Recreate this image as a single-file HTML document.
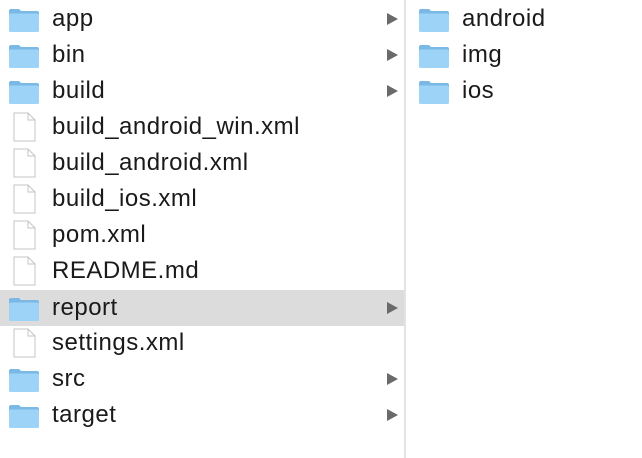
<!DOCTYPE html>
<html><head><style>
body{margin:0;width:642px;height:458px;background:#fff;font-family:"Liberation Sans",sans-serif;overflow:hidden;position:relative}
.col{position:absolute;top:0;height:458px}
.row{position:absolute;left:0;height:36px;width:100%}
.row span{position:absolute;left:52px;top:5px;font-size:24px;letter-spacing:0.5px;color:#1a1a1a;line-height:26px}
.row svg.i{position:absolute;left:8px;top:6px}
.arr{position:absolute;right:6px;top:12px;width:0;height:0;border-left:11px solid #6a6a6a;border-top:6px solid transparent;border-bottom:6px solid transparent}
.sel{background:#dcdcdc}
#div{position:absolute;left:404px;top:0;width:2px;height:458px;background:#e4e4e4}
</style></head><body>
<svg width="0" height="0" style="position:absolute"><defs>
<symbol id="f" viewBox="0 0 32 26"><path d="M1 4 Q1 2 3 2 H11 L13 4 H29 Q31 4 31 6 V23 Q31 25 29 25 H3 Q1 25 1 23Z" fill="#7ab9e6"/><path d="M1 8 Q1 6.5 3 6.5 H29 Q31 6.5 31 8 V23 Q31 25 29 25 H3 Q1 25 1 23Z" fill="#9dd3f6"/></symbol>
<symbol id="d" viewBox="0 0 32 30"><path d="M6 1 H20 L27 8 V29 H6Z" fill="#fff" stroke="#c4c4c4"/><path d="M20 1 V8 H27" fill="none" stroke="#c4c4c4"/></symbol>
</defs></svg>
<div class="col" style="left:0;width:404px">
<div class="row" style="top:1px"><svg class="i" width="32" height="26"><use href="#f"/></svg><span>app</span><div class="arr"></div></div>
<div class="row" style="top:37px"><svg class="i" width="32" height="26"><use href="#f"/></svg><span>bin</span><div class="arr"></div></div>
<div class="row" style="top:73px"><svg class="i" width="32" height="26"><use href="#f"/></svg><span>build</span><div class="arr"></div></div>
<div class="row" style="top:109px"><svg class="i" width="32" height="30" style="top:3px"><use href="#d"/></svg><span>build_android_win.xml</span></div>
<div class="row" style="top:145px"><svg class="i" width="32" height="30" style="top:3px"><use href="#d"/></svg><span>build_android.xml</span></div>
<div class="row" style="top:181px"><svg class="i" width="32" height="30" style="top:3px"><use href="#d"/></svg><span>build_ios.xml</span></div>
<div class="row" style="top:217px"><svg class="i" width="32" height="30" style="top:3px"><use href="#d"/></svg><span>pom.xml</span></div>
<div class="row" style="top:253px"><svg class="i" width="32" height="30" style="top:3px"><use href="#d"/></svg><span>README.md</span></div>
<div class="row sel" style="top:290px"><svg class="i" width="32" height="26"><use href="#f"/></svg><span>report</span><div class="arr"></div></div>
<div class="row" style="top:325px"><svg class="i" width="32" height="30" style="top:3px"><use href="#d"/></svg><span>settings.xml</span></div>
<div class="row" style="top:361px"><svg class="i" width="32" height="26"><use href="#f"/></svg><span>src</span><div class="arr"></div></div>
<div class="row" style="top:397px"><svg class="i" width="32" height="26"><use href="#f"/></svg><span>target</span><div class="arr"></div></div>
</div>
<div id="div"></div>
<div class="col" style="left:410px;width:232px">
<div class="row" style="top:1px"><svg class="i" width="32" height="26"><use href="#f"/></svg><span>android</span></div>
<div class="row" style="top:37px"><svg class="i" width="32" height="26"><use href="#f"/></svg><span>img</span></div>
<div class="row" style="top:73px"><svg class="i" width="32" height="26"><use href="#f"/></svg><span>ios</span></div>
</div>
</body></html>
